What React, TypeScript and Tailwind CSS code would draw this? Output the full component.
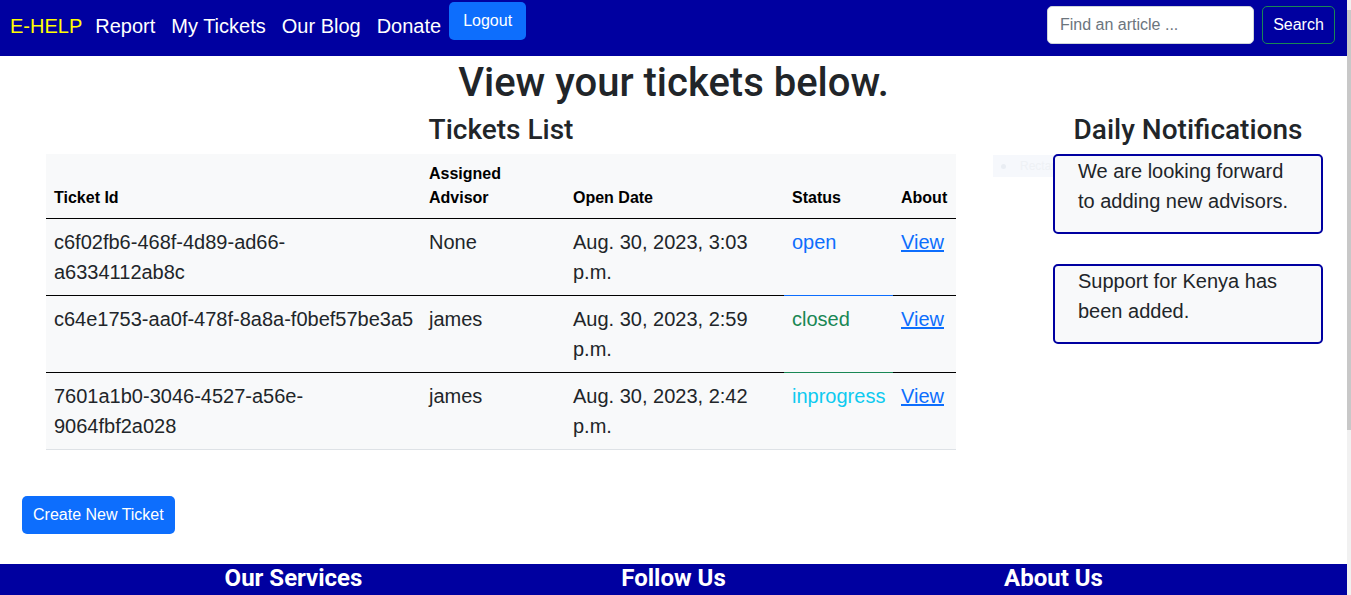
import React from "react";

const font = { fontFamily: '"Liberation Sans", Arial, sans-serif' };
const headFont = { fontFamily: 'Roboto, "Liberation Sans", Arial, sans-serif' };

type Row = {
  id: string;
  advisor: string;
  date: string;
  status: string;
  statusClass: string;
  statusBorder: string;
  rowBorder: string;
  nowrap: boolean;
};

const rows: Row[] = [
  {
    id: "c6f02fb6-468f-4d89-ad66-a6334112ab8c",
    advisor: "None",
    date: "Aug. 30, 2023, 3:03 p.m.",
    status: "open",
    statusClass: "text-[#0d6efd]",
    statusBorder: "border-[#0d6efd]",
    rowBorder: "border-black",
    nowrap: false,
  },
  {
    id: "c64e1753-aa0f-478f-8a8a-f0bef57be3a5",
    advisor: "james",
    date: "Aug. 30, 2023, 2:59 p.m.",
    status: "closed",
    statusClass: "text-[#198754]",
    statusBorder: "border-[#198754]",
    rowBorder: "border-black",
    nowrap: true,
  },
  {
    id: "7601a1b0-3046-4527-a56e-9064fbf2a028",
    advisor: "james",
    date: "Aug. 30, 2023, 2:42 p.m.",
    status: "inprogress",
    statusClass: "text-[#0dcaf0]",
    statusBorder: "border-[#dee2e6]",
    rowBorder: "border-[#dee2e6]",
    nowrap: false,
  },
];

export default function App() {
  return (
    <div className="flex min-h-screen bg-white text-[#212529]" style={font}>
      <div className="w-[1347px] shrink-0">
        {/* Navbar */}
        <nav className="flex h-[56px] items-start bg-[#0000a0] pl-[10px] pr-[12px]">
          <a className="mt-[11px] mr-[5px] text-[20px] leading-[30px] text-[#ffff00]">E-HELP</a>
          <div className="mt-[11px] flex">
            <a className="px-[8px] text-[20px] leading-[30px] text-white">Report</a>
            <a className="px-[8px] text-[20px] leading-[30px] text-white">My Tickets</a>
            <a className="px-[8px] text-[20px] leading-[30px] text-white">Our Blog</a>
            <a className="px-[8px] text-[20px] leading-[30px] text-white">Donate</a>
          </div>
          <button className="mt-[2px] h-[38px] rounded-[5px] bg-[#0d6efd] px-[14px] text-[16px] text-white">
            Logout
          </button>
          <div className="ml-auto mt-[6px] flex gap-[8px]">
            <input
              className="h-[38px] w-[207px] rounded-[5px] border border-[#ced4da] bg-white px-[12px] text-[16px] text-[#212529] placeholder:text-[#6c757d] outline-none"
              placeholder="Find an article ..."
            />
            <button className="h-[38px] w-[73px] rounded-[5px] border border-[#198754] text-[16px] text-white">
              Search
            </button>
          </div>
        </nav>

        {/* Title */}
        <h1 className="mt-[3px] mb-[6px] text-center text-[40px] font-medium leading-[48px]" style={headFont}>
          View your tickets below.
        </h1>

        {/* Content row */}
        <div className="flex items-start">
          <div className="ml-[46px] w-[910px]">
            <h3 className="mb-[8px] text-center text-[28px] font-medium leading-[33px]" style={headFont}>
              Tickets List
            </h3>
            <table className="w-[910px] table-fixed border-collapse bg-[#f8f9fa]">
              <colgroup>
                <col className="w-[375px]" />
                <col className="w-[144px]" />
                <col className="w-[219px]" />
                <col className="w-[109px]" />
                <col className="w-[63px]" />
              </colgroup>
              <thead>
                <tr className="border-b border-black">
                  <th className="p-[8px] text-left align-bottom text-[16px] font-bold leading-[24px] text-black">Ticket Id</th>
                  <th className="p-[8px] text-left align-bottom text-[16px] font-bold leading-[24px] text-black">
                    Assigned Advisor
                  </th>
                  <th className="p-[8px] text-left align-bottom text-[16px] font-bold leading-[24px] text-black">Open Date</th>
                  <th className="p-[8px] text-left align-bottom text-[16px] font-bold leading-[24px] text-black">Status</th>
                  <th className="p-[8px] text-left align-bottom text-[16px] font-bold leading-[24px] text-black">About</th>
                </tr>
              </thead>
              <tbody>
                {rows.map((r) => (
                  <tr key={r.id} className="text-[20px] leading-[30px]">
                    <td
                      className={`border-b p-[8px] align-top ${r.nowrap ? "whitespace-nowrap" : "break-words"} ${r.rowBorder}`}
                    >
                      {r.id}
                    </td>
                    <td className={`border-b p-[8px] align-top ${r.rowBorder}`}>{r.advisor}</td>
                    <td className={`border-b p-[8px] align-top ${r.rowBorder}`}>{r.date}</td>
                    <td className={`border-b p-[8px] align-top ${r.statusClass} ${r.statusBorder}`}>{r.status}</td>
                    <td className={`border-b p-[8px] align-top ${r.rowBorder}`}>
                      <a className="text-[#0d6efd] underline">View</a>
                    </td>
                  </tr>
                ))}
              </tbody>
            </table>
          </div>

          <div className="relative ml-auto flex w-[318px] flex-col items-center">
            <h3 className="mb-[8px] text-center text-[28px] font-medium leading-[33px]" style={headFont}>
              Daily Notifications
            </h3>
            {/* faint snip-tool ghost behind the notice */}
            <div className="absolute left-[-36px] top-[42px] flex h-[22px] w-[172px] items-center bg-[#f6f8fc]">
              <span className="ml-[8px] h-[5px] w-[5px] rounded-full bg-[#e9edf3]" />
              <span className="ml-[14px] text-[12px] text-[#eef1f5]">Rectangular Snip</span>
            </div>
            <div className="relative mb-[30px] w-[270px] rounded-[5px] border-2 border-[#0000a0] bg-[#f8f9fa] px-[23px] pb-[16px]">
              <p className="text-[20px] leading-[30px]">We are looking forward to adding new advisors.</p>
            </div>
            <div className="relative w-[270px] rounded-[5px] border-2 border-[#0000a0] bg-[#f8f9fa] px-[23px] pb-[16px]">
              <p className="text-[20px] leading-[30px]">Support for Kenya has been added.</p>
            </div>
          </div>
        </div>

        <div className="mt-[46px] pl-[22px]">
          <button className="h-[38px] rounded-[5px] bg-[#0d6efd] px-[11px] text-[16px] text-white">Create New Ticket</button>
        </div>

        {/* Footer */}
        <footer className="mt-[30px] bg-[#0000a0] pb-[40px] text-white">
          <div className="mx-auto grid w-[1140px] grid-cols-3">
            <div className="text-center">
              <h4 className="text-[24px] font-bold leading-[29px]" style={headFont}>
                Our Services
              </h4>
              <ul className="mt-[8px] text-[16px] leading-[24px]">
                <li>Reporting</li>
                <li>Advisory</li>
                <li>Support</li>
              </ul>
            </div>
            <div className="text-center">
              <h4 className="text-[24px] font-bold leading-[29px]" style={headFont}>
                Follow Us
              </h4>
              <ul className="mt-[8px] text-[16px] leading-[24px]">
                <li>Facebook</li>
                <li>Twitter</li>
                <li>Instagram</li>
              </ul>
            </div>
            <div className="text-center">
              <h4 className="text-[24px] font-bold leading-[29px]" style={headFont}>
                About Us
              </h4>
              <p className="mt-[8px] text-[16px] leading-[24px]">E-HELP connects you with advisors.</p>
            </div>
          </div>
        </footer>
      </div>

      {/* thin scrollbar strip */}
      <div className="flex-1 bg-[#f1f1f1]">
        <div className="mt-[10px] h-[420px] bg-[#c8c8c8]" />
      </div>
    </div>
  );
}
